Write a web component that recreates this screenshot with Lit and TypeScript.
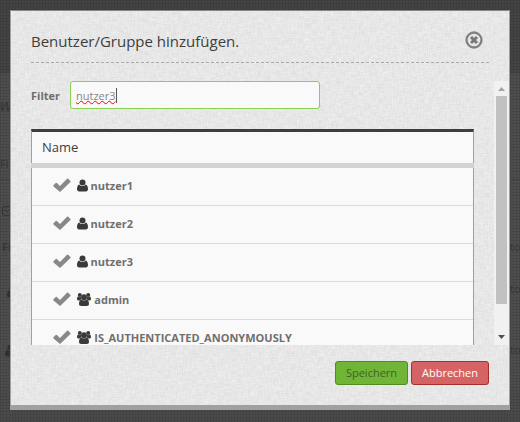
import { LitElement, html, css, svg } from "lit";
import { customElement, property } from "lit/decorators.js";

const PERSON = svg`<circle cx="5.500" cy="3" r="3"/><path d="M2.300 5C3.100 6 4.200 6.500 5.500 6.500s2.400-.5 3.200-1.500C10.300 5.400 11 7.600 11 9.600c0 1.500-.8 2.400-2.100 2.400H2.100C.8 12 0 11.100 0 9.600 0 7.600.7 5.400 2.300 5z"/>`;

@customElement("member-icon")
class MemberIcon extends LitElement {
  @property() kind = "user";
  static styles = css`
    :host { display: block; height: 13px; }
    svg { display: block; fill: #3a3a3a; }
  `;
  render() {
    return this.kind === "user"
      ? html`<svg width="11" height="13" viewBox="0 -.5 11 13">${PERSON}</svg>`
      : html`<svg width="14" height="13" viewBox="0 0 14 13">
          <circle cx="2.800" cy="2" r="2"/><circle cx="11.200" cy="2" r="2"/>
          <path d="M1.200 3.400 2.800 4.200 4 3.700C3.900 4.800 4.200 5.600 4.600 6.400 3.700 6.500 3.100 6.800 2.600 7.400H1.400C.5 7.400 0 6.900 0 6.100 0 4.900.3 3.600 1.200 3.400zM12.800 3.400 11.200 4.200 10 3.700C10.100 4.800 9.800 5.600 9.400 6.400 10.300 6.500 10.900 6.800 11.400 7.400h1.200c.9 0 1.400-.5 1.400-1.300 0-1.200-.3-2.500-1.200-2.700z"/>
          <circle cx="7" cy="4.200" r="2.900"/>
          <path d="M4.500 6.500C5.200 7.200 6 7.400 7 7.400s1.800-.2 2.500-.9c1.700.1 2.500 2.200 2.500 4.300 0 1.400-.8 2.200-2.100 2.200H4.100C2.800 13 2 12.200 2 10.800c0-2.100.8-4.200 2.500-4.300z"/>
        </svg>`;
  }
}

@customElement("member-row")
class MemberRow extends LitElement {
  @property() name = "";
  @property() kind = "user";
  static styles = css`
    :host { display: flex; align-items: center; box-sizing: border-box; height: 38px; padding: 0 0 2px 21px; border-bottom: 1px solid #dcdcdc; background: #f9f9f9; }
    .check { width: 18px; height: 14px; fill: #888; margin: -1px 6px 0 0; }
    .name { margin-left: 2.600px; font-weight: 700; line-height: 16px; }
    :host([kind="group"]) .name { margin-left: 3.300px; }
  `;
  render() {
    return html`<svg class="check" viewBox="0 0 18 14"><path d="M.5 7.200 2.700 5q.6-.6 1.200 0L7 8 14 .7q.6-.6 1.200 0L17.400 2.900q.6.600 0 1.200L7.600 13.400q-.6.600-1.200 0L.5 8.400q-.6-.6 0-1.200z"/></svg>
      <member-icon kind=${this.kind}></member-icon><span class="name">${this.name}</span>`;
  }
}

@customElement("app-root")
class AppRoot extends LitElement {
  static styles = css`
    :host { display: block; position: relative; width: 520px; height: 422px; overflow: hidden; box-sizing: border-box; padding: 10px;
      font: 12px/16px "Open Sans", sans-serif; color: #6f6f6f;
      background: repeating-linear-gradient(90deg, #00000016 0 1px, transparent 1px 3px), repeating-linear-gradient(#00000016 0 1px, transparent 1px 3px), linear-gradient(#444 72px, #4e4e4e 74px, #4e4e4e 360px, #4a4a4a); }
    .ghost { position: absolute; color: #353535; font-size: 11px; line-height: 16px; white-space: nowrap; }
    .big { font-size: 17px; font-style: italic; }
    .bold { font-weight: 700; }
    .rule { position: absolute; left: 0; width: 520px; height: 1px; background: #404040; }
    .tick { position: absolute; left: 2px; top: 206px; width: 10px; height: 10px; fill: none; stroke: #353535; }
    .shade { position: absolute; }
    .modal { position: relative; box-sizing: border-box; width: 500px; height: 400px; background: #e6e6e6; border: 1px solid #a0a0a0; border-top-color: #888; border-bottom: 5px solid #a0a0a0; display: flex; flex-direction: column; }
    .grain { position: absolute; inset: 0; width: 498px; height: 394px; }
    header { position: relative; display: flex; justify-content: space-between; margin: 0 20px; height: 51px; border-bottom: 1px dashed #aaa; }
    h1 { margin: 19px 0 0; font: 400 15px/22px "Open Sans", sans-serif; color: #3e3e3e; }
    .close { width: 18px; height: 18px; margin: 20px 6px 0 0; }
    .body { position: relative; display: flex; justify-content: space-between; height: 264px; margin-top: 18px; overflow: hidden; }
    .content { width: 443px; margin-left: 20px; }
    .filter { display: flex; align-items: center; height: 28px; }
    label { width: 39px; padding-top: 2px; font-size: 11px; font-weight: 700; }
    .field { box-sizing: border-box; width: 250px; height: 28px; border: 1px solid #88cf52; border-radius: 3px; background: #f9f9f9; padding: 6px 5px; color: #888; font-size: 11px; line-height: 15px; display: flex; }
    .typed { height: 15px; border-right: 1px solid #555; text-decoration: underline wavy #f00 1px; text-decoration-skip-ink: none; text-underline-offset: 0; }
    .table { box-sizing: border-box; margin-top: 20px; border: 1px solid #a0a0a0; border-top: 3px solid #3e3e3e; font-size: 11px; background: #f9f9f9; }
    .th { height: 31px; margin: 0 -1px; padding-left: 11px; border-bottom: 5px solid #d3d3d3; font-size: 13px; line-height: 31px; color: #3e3e3e; }
    .bar { width: 15px; height: 264px; background: #f1f1f1; display: flex; flex-direction: column; align-items: center; }
    .bar svg { width: 15px; height: 15px; display: block; }
    .thumb { width: 11px; height: 208px; background: #c1c1c1; margin-bottom: 26px; }
    footer { position: relative; display: flex; justify-content: flex-end; gap: 3px; margin: 16px 20px 0; }
    button { box-sizing: border-box; height: 24px; padding: 0; border-radius: 3px; font: 11px/20px "Open Sans", sans-serif; }
    .save { width: 73px; background: #70b536; border: 1px solid #508c20; color: #3f5f2b; }
    .cancel { width: 78px; background: #d56363; border: 1px solid #a42f2f; color: #fff; }
  `;
  render() {
    const rows = [["nutzer1", "user"], ["nutzer2", "user"], ["nutzer3", "user"], ["admin", "group"], ["IS_AUTHENTICATED_ANONYMOUSLY", "group"]];
    const rules = [147, 179];
    return html`
      ${rules.map((y) => html`<div class="rule" style="top:${y}px"></div>`)}
      <span class="ghost big" style="left:0;top:97px">w</span>
      <span class="ghost" style="left:0;top:156px">Fi</span>
      <span class="ghost bold" style="left:2px;top:239px">Fi</span>
      <svg class="tick"><rect x=".5" y=".5" width="12" height="9" rx="2"/><path d="m2 3 3 3 4-4"/></svg>
      ${[239, 281, 342].map((y) => html`<span class="ghost" style="left:510px;top:${y}px">to</span>`)}
      <svg class="shade" style="left:7px;top:285px" width="11" height="13" viewBox="0 -.5 11 13" fill="#303030">${PERSON}</svg>
      <svg class="shade" style="left:5px;top:344px" width="11" height="13" viewBox="0 -.5 11 13" fill="#303030">${PERSON}</svg>
      <div class="modal">
        <svg class="grain"><filter id="g" x="0" y="0" width="100%" height="100%" color-interpolation-filters="sRGB">
          <feTurbulence type="fractalNoise" baseFrequency=".15 .8" numOctaves="2" seed="3" result="a"/>
          <feTurbulence type="fractalNoise" baseFrequency=".8 .15" numOctaves="2" seed="8" result="b"/>
          <feComposite in="a" in2="b" operator="arithmetic" k2=".5" k3=".5"/>
          <feColorMatrix values=".14 0 0 0 .835 .14 0 0 0 .835 .14 0 0 0 .835 0 0 0 0 1"/>
        </filter><rect width="498" height="394" filter="url(#g)"/></svg>
        <header><h1>Benutzer/Gruppe hinzufügen.</h1>
          <svg class="close" viewBox="0 0 18 18"><circle cx="9" cy="9" r="7.500" fill="none" stroke="#818181" stroke-width="2.300"/><path d="m6 6 6 6m0-6-6 6" stroke="#777" stroke-width="3"/></svg>
        </header>
        <div class="body">
          <div class="content">
            <div class="filter"><label>Filter</label><div class="field"><span class="typed">nutzer3</span></div></div>
            <div class="table"><div class="th">Name</div>${rows.map(([n, k]) => html`<member-row name=${n} kind=${k}></member-row>`)}</div>
          </div>
          <div class="bar"><svg><path d="M4 10h7L7.500 6z" fill="#a3a3a3"/></svg><div class="thumb"></div><svg><path d="M4 5h7L7.500 9z" fill="#505050"/></svg></div>
        </div>
        <footer><button class="save">Speichern</button><button class="cancel">Abbrechen</button></footer>
      </div>`;
  }
}
